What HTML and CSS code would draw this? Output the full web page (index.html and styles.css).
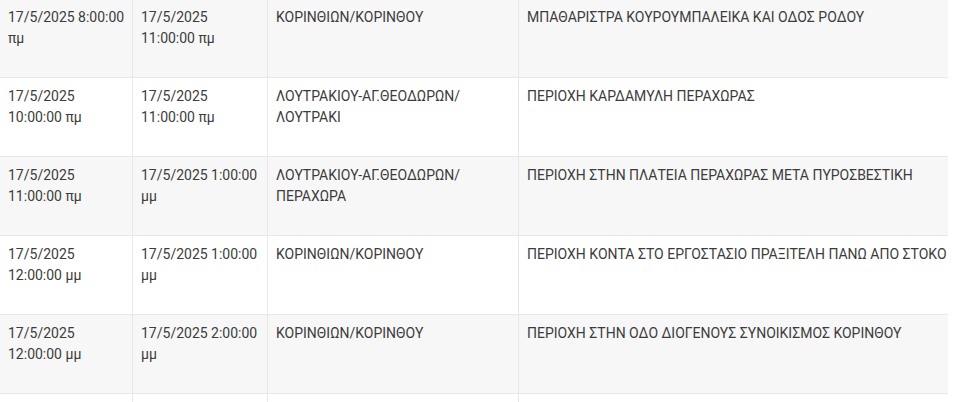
FILE: index.html
```html
<!DOCTYPE html>
<html lang="el">
<head>
<meta charset="utf-8">
<link rel="stylesheet" href="styles.css">
</head>
<body>
<div class="wrap">
<table class="outages">
<colgroup>
<col class="c1"><col class="c2"><col class="c3"><col class="c4">
</colgroup>
<tbody>
<tr><td>17/5/2025 8:00:00 πμ</td><td>17/5/2025 11:00:00 πμ</td><td>ΚΟΡΙΝΘΙΩΝ/ΚΟΡΙΝΘΟΥ</td><td>ΜΠΑΘΑΡΙΣΤΡΑ ΚΟΥΡΟΥΜΠΑΛΕΙΚΑ ΚΑΙ ΟΔΟΣ ΡΟΔΟΥ</td></tr>
<tr><td>17/5/2025 10:00:00 πμ</td><td>17/5/2025 11:00:00 πμ</td><td>ΛΟΥΤΡΑΚΙΟΥ-ΑΓ.ΘΕΟΔΩΡΩΝ/ ΛΟΥΤΡΑΚΙ</td><td>ΠΕΡΙΟΧΗ ΚΑΡΔΑΜΥΛΗ ΠΕΡΑΧΩΡΑΣ</td></tr>
<tr><td>17/5/2025 11:00:00 πμ</td><td>17/5/2025 1:00:00 μμ</td><td>ΛΟΥΤΡΑΚΙΟΥ-ΑΓ.ΘΕΟΔΩΡΩΝ/ ΠΕΡΑΧΩΡΑ</td><td>ΠΕΡΙΟΧΗ ΣΤΗΝ ΠΛΑΤΕΙΑ ΠΕΡΑΧΩΡΑΣ ΜΕΤΑ ΠΥΡΟΣΒΕΣΤΙΚΗ</td></tr>
<tr><td>17/5/2025 12:00:00 μμ</td><td>17/5/2025 1:00:00 μμ</td><td>ΚΟΡΙΝΘΙΩΝ/ΚΟΡΙΝΘΟΥ</td><td>ΠΕΡΙΟΧΗ ΚΟΝΤΑ ΣΤΟ ΕΡΓΟΣΤΑΣΙΟ ΠΡΑΞΙΤΕΛΗ ΠΑΝΩ ΑΠΟ ΣΤΟΚΟ</td></tr>
<tr><td>17/5/2025 12:00:00 μμ</td><td>17/5/2025 2:00:00 μμ</td><td>ΚΟΡΙΝΘΙΩΝ/ΚΟΡΙΝΘΟΥ</td><td>ΠΕΡΙΟΧΗ ΣΤΗΝ ΟΔΟ ΔΙΟΓΕΝΟΥΣ ΣΥΝΟΙΚΙΣΜΟΣ ΚΟΡΙΝΘΟΥ</td></tr>
<tr><td></td><td></td><td></td><td></td></tr>
</tbody>
</table>
</div>
</body>
</html>
```
FILE: styles.css
```css
html, body {
  margin: 0;
  padding: 0;
  background: #fff;
}
.wrap {
  width: 948px;
  height: 402px;
  overflow: hidden;
}
.outages {
  margin-top: -1px;
  border-collapse: separate;
  border-spacing: 0;
  table-layout: fixed;
  width: 1100px;
  font-family: Roboto, "Noto Sans", sans-serif;
  font-size: 14px;
  line-height: 21px;
  color: #3c3c3c;
}
.c1 { width: 133px; }
.c2 { width: 135px; }
.c3 { width: 251px; }
.c4 { width: 581px; }
.outages td {
  box-sizing: border-box;
  height: 79px;
  padding: 8px 4px 8px 8px;
  vertical-align: top;
  border-right: 1px solid #e8e8e8;
  border-bottom: 1px solid #e8e8e8;
}
.outages td:last-child {
  border-right: none;
}
.outages tr:nth-child(odd) td {
  background: #f7f7f7;
}
```
